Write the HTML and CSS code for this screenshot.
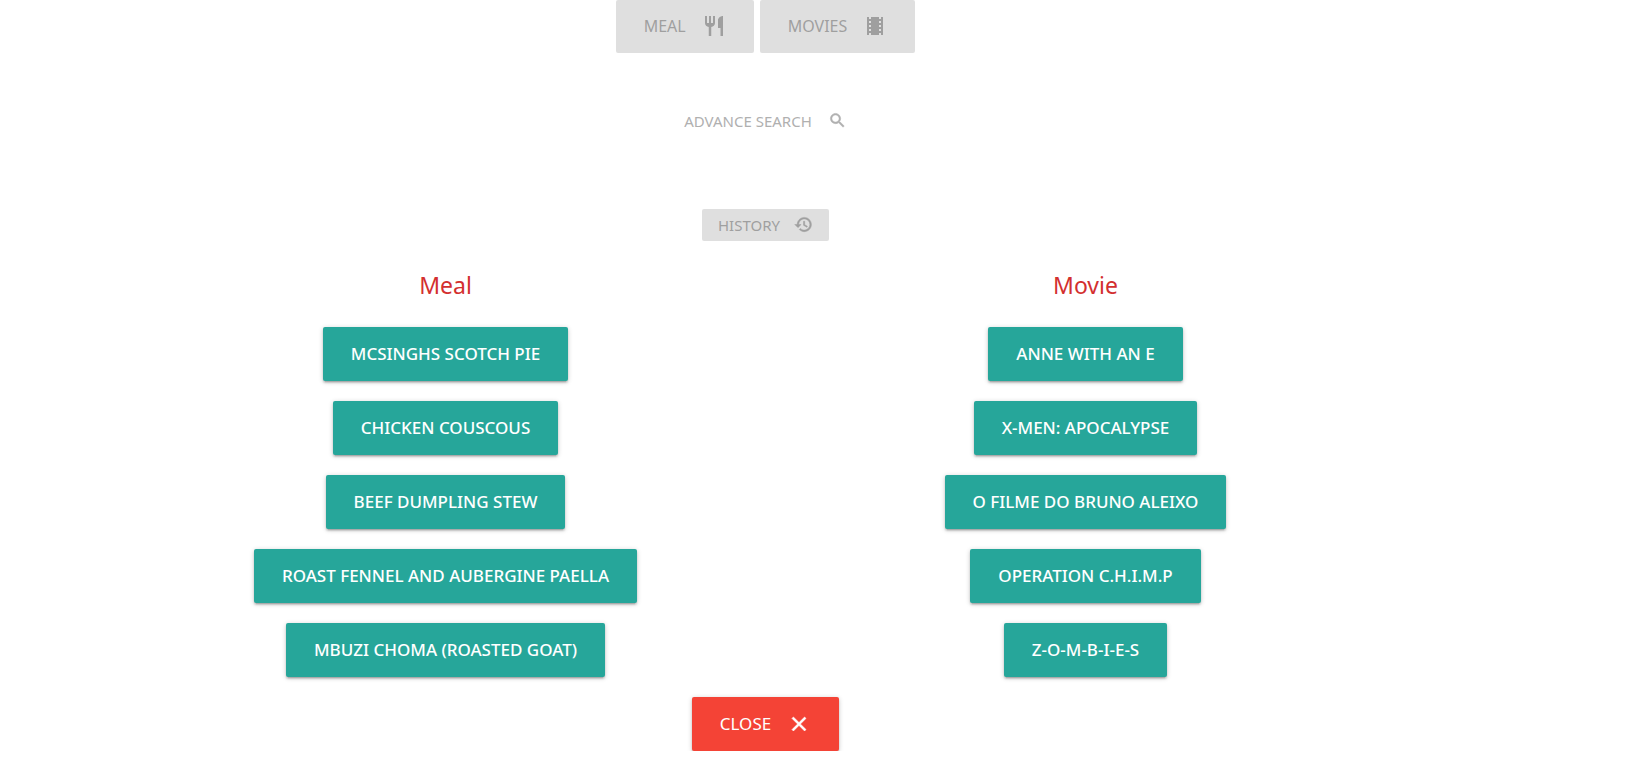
FILE: index.html
```html
<!DOCTYPE html>
<html lang="en">
<head>
<meta charset="utf-8">
<title>Meal and Movie</title>
<link rel="stylesheet" href="styles.css">
</head>
<body>
<main class="page">
  <nav class="choices">
    <button class="btn btn-large btn-muted" type="button">Meal
      <svg class="icon icon-large" viewBox="0 0 24 24" aria-hidden="true"><path d="M11 9H9V2H7v7H5V2H3v7c0 2.120 1.660 3.840 3.750 3.970V22h2.500v-9.030C11.340 12.840 13 11.120 13 9V2h-2v7zm5-3v8h2.500v8H21V2c-2.760 0-5 2.240-5 4z"/></svg>
    </button>
    <button class="btn btn-large btn-muted" type="button">Movies
      <svg class="icon icon-large" viewBox="0 0 24 24" aria-hidden="true"><path d="M18 3v2h-2V3H8v2H6V3H4v18h2v-2h2v2h8v-2h2v2h2V3h-2zM8 17H6v-2h2v2zm0-4H6v-2h2v2zm0-4H6V7h2v2zm10 8h-2v-2h2v2zm0-4h-2v-2h2v2zm0-4h-2V7h2v2z"/></svg>
    </button>
  </nav>
  <button class="btn btn-flat" type="button">Advance Search
    <svg class="icon icon-small icon-bold" viewBox="0 0 24 24" aria-hidden="true"><path d="M15.500 14h-.79l-.28-.27C15.410 12.590 16 11.110 16 9.500 16 5.910 13.090 3 9.500 3S3 5.910 3 9.500 5.910 16 9.500 16c1.610 0 3.090-.59 4.230-1.570l.27.28v.79l5 4.990L20.490 19l-4.990-5zm-6 0C7.010 14 5 11.990 5 9.500S7.010 5 9.500 5 14 7.010 14 9.500 11.990 14 9.500 14z"/></svg>
  </button>
  <button class="btn btn-small btn-muted" type="button">History
    <svg class="icon icon-small icon-bold" viewBox="0 0 24 24" aria-hidden="true"><path d="M13 3c-4.970 0-9 4.030-9 9H1l3.890 3.890.07.14L9 12H6c0-3.870 3.130-7 7-7s7 3.130 7 7-3.130 7-7 7c-1.930 0-3.680-.79-4.940-2.060l-1.420 1.420C8.270 19.990 10.510 21 13 21c4.970 0 9-4.030 9-9s-4.030-9-9-9zm-1 5v5l4.280 2.540.72-1.210-3.500-2.080V8H12z"/></svg>
  </button>
  <div class="history">
    <section class="column">
      <h2 class="title">Meal</h2>
      <button class="btn btn-large btn-item" type="button">McSinghs Scotch Pie</button>
      <button class="btn btn-large btn-item" type="button">Chicken Couscous</button>
      <button class="btn btn-large btn-item" type="button">Beef Dumpling Stew</button>
      <button class="btn btn-large btn-item" type="button">Roast Fennel and Aubergine Paella</button>
      <button class="btn btn-large btn-item" type="button">Mbuzi Choma (Roasted Goat)</button>
    </section>
    <section class="column">
      <h2 class="title">Movie</h2>
      <button class="btn btn-large btn-item" type="button">Anne with an E</button>
      <button class="btn btn-large btn-item" type="button">X-Men: Apocalypse</button>
      <button class="btn btn-large btn-item" type="button">O Filme do Bruno Aleixo</button>
      <button class="btn btn-large btn-item" type="button">Operation C.H.I.M.P</button>
      <button class="btn btn-large btn-item" type="button">Z-O-M-B-I-E-S</button>
    </section>
  </div>
  <button class="btn btn-large btn-close" type="button">Close
    <svg class="icon icon-large icon-bold" viewBox="0 0 24 24" aria-hidden="true"><path d="M19 6.410L17.590 5 12 10.590 6.410 5 5 6.410 10.590 12 5 17.590 6.410 19 12 13.410 17.590 19 19 17.590 13.410 12z"/></svg>
  </button>
</main>
</body>
</html>
```
FILE: styles.css
```css
* {
  box-sizing: border-box;
}

body {
  margin: 0;
  padding-right: 95px;
  background: #fff;
  font-family: "Noto Sans", "Open Sans", sans-serif;
}

.page {
  display: flex;
  flex-direction: column;
  align-items: center;
  max-width: 1280px;
  margin: 0 auto;
}

.btn {
  display: inline-flex;
  align-items: center;
  justify-content: center;
  border: 0;
  border-radius: 2px;
  font-family: "Noto Sans", sans-serif;
  text-transform: uppercase;
  white-space: nowrap;
  cursor: pointer;
}

.btn-large {
  gap: 16px;
  height: 54px;
  padding: 0 28px 1px;
  font-size: 16px;
}

.btn-small {
  gap: 14px;
  height: 32px;
  padding: 0 16px 1px;
  font-size: 15px;
}

.btn-flat {
  gap: 16px;
  height: 36px;
  margin: 50px 0 70px;
  padding: 0 16px 1px;
  background: transparent;
  color: #b0b0b0;
  font-size: 15px;
}

.btn-muted {
  background: #dfdfdf;
  color: #9f9f9f;
}

.btn-item,
.btn-close {
  box-shadow: 0 2px 2px rgba(0, 0, 0, .14), 0 3px 1px -2px rgba(0, 0, 0, .12), 0 1px 5px rgba(0, 0, 0, .2);
  color: #fff;
  font-size: 17px;
}

.btn-item {
  background: #26a69a;
  font-weight: 500;
}

.btn-close {
  background: #f44336;
}

.icon {
  flex: none;
  fill: currentColor;
}

.icon-large {
  width: 24px;
  height: 24px;
}

.icon-small {
  width: 19px;
  height: 19px;
}

.icon-bold {
  stroke: currentColor;
  stroke-width: .6;
}

.choices {
  display: flex;
  gap: 6px;
}

.choices .btn {
  height: 53px;
}

.history {
  display: grid;
  grid-template-columns: 1fr 1fr;
  width: 100%;
  padding: 26px 0 20px;
}

.column {
  display: flex;
  flex-direction: column;
  align-items: center;
  gap: 20px;
}

.title {
  margin: 0 0 4px;
  color: #d32f2f;
  font-size: 23px;
  font-weight: 400;
  line-height: 36px;
}
```
